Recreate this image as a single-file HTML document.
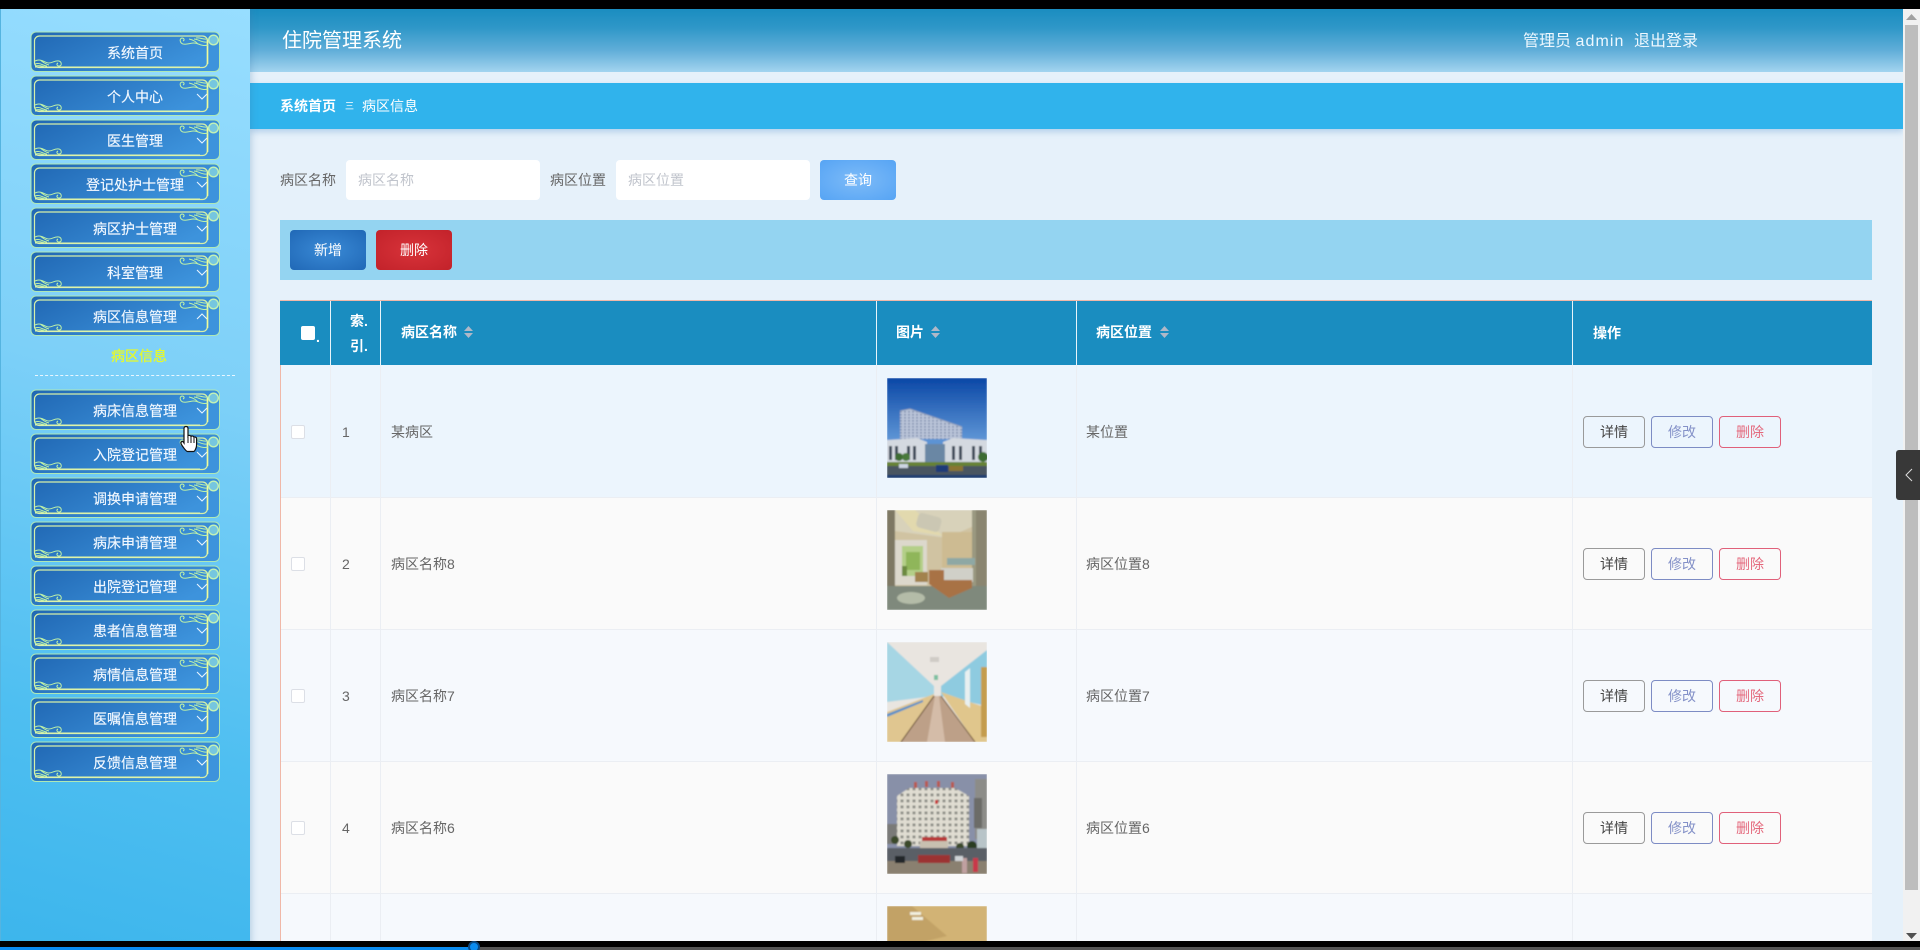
<!DOCTYPE html>
<html lang="zh-CN"><head><meta charset="utf-8"><title>住院管理系统</title>
<style>
html,body{margin:0;padding:0;width:1920px;height:950px;overflow:hidden;background:#e6f1fa}
body{font-family:"Liberation Sans","Noto Sans CJK SC",sans-serif;font-size:14px;color:#666;position:relative}
.a{position:absolute;white-space:nowrap}
#side{left:0;top:0;width:250px;height:950px;background:linear-gradient(196deg,#98deff 0%,#7dd0f8 40%,#4fbff1 75%,#3cb5ec 100%);border-left:1px solid #55b4e0;box-sizing:border-box;box-shadow:2px 0 6px rgba(60,120,170,.25);z-index:2}
.m{position:absolute;left:29px;width:190px;height:42px}
.m svg{position:absolute;left:0;top:0}
.m span{position:absolute;left:0;width:210px;text-align:center;top:12px;line-height:21px;color:#f2f8ff;font-size:14px;-webkit-text-stroke:.15px #f2f8ff}
#hd{left:250px;top:9px;width:1653px;height:63px;background:linear-gradient(180deg,#1a8dc0 0%,#2f97c8 30%,#5fadd8 65%,#a3d4ef 100%);color:#fff}
#bc{left:250px;top:83px;width:1653px;height:46px;background:#30b3ec;box-shadow:0 3px 6px rgba(90,150,210,.35);color:#fff;line-height:46px}
.ip{position:absolute;top:160px;height:40px;background:#fff;border-radius:4px;width:194px;line-height:40px;color:#c0c4cc;text-indent:12px}
.bt{position:absolute;width:76px;height:40px;line-height:40px;text-align:center;color:#fff;border-radius:4px}
#tb{left:280px;top:300px;width:1592px;height:641px;overflow:hidden;border-top:1px solid #f0b8a8;box-sizing:border-box}
.hl{position:absolute;top:0;width:1px;height:64px;background:#e8f4fa}
.vl{position:absolute;top:64px;width:1px;height:600px;background:#ebeef3}
.th{position:absolute;color:#fff;font-weight:bold;font-size:14px;line-height:24px}
.r{position:absolute;left:0;width:1592px;height:132px;box-sizing:border-box;border-bottom:1px solid #ebeef3}
.r>*{position:absolute}
.cb{left:11px;top:59px;width:12px;height:12px;border:1px solid #dcdfe6;background:#fff;border-radius:2px}
.tx{top:55px;line-height:22px;color:#666;font-size:14px}
.op{top:50px;width:60px;height:30px;border:1px solid;border-radius:4px;background:transparent;text-align:center;line-height:30px;font-size:14px}
.f>.cb{top:60px}.f>.tx{top:56px}.f>.op{top:51px}
.o1{left:1303px;border-color:#9a9a9a;color:#444}
.o2{left:1371px;border-color:#7d8cc4;color:#8491c8}
.o3{left:1439px;border-color:#e0607a;color:#e4687c}
.im{left:607px;top:12px;width:100px;height:100px;display:block}
.so{position:absolute;width:9px;height:12px}
</style></head><body>
<svg width="0" height="0" style="position:absolute"><defs>
<linearGradient id="g" x1="0" y1="0" x2="1" y2="0.4"><stop offset="0" stop-color="#2067b3"/><stop offset="1" stop-color="#3d93dc"/></linearGradient>
<filter id="bl" x="-5%" y="-5%" width="110%" height="110%"><feGaussianBlur stdDeviation=".8"/></filter>
<pattern id="w1" width="4" height="3" patternUnits="userSpaceOnUse"><rect width="4" height="3" fill="#bcc6da"/><rect x="1" y="0" width="2" height="1.6" fill="#7f8fae"/></pattern>
<pattern id="w4" width="6" height="6" patternUnits="userSpaceOnUse"><rect width="6" height="6" fill="#e0ddd2"/><rect x="1.5" y="1.5" width="3" height="2.8" fill="#8a8a84"/></pattern>
<symbol id="mb" viewBox="0 0 190 42">
<rect x="1" y="1" width="188.500" height="39.5" rx="5" fill="url(#g)" stroke="#aee8b6" stroke-width="1"/>
<rect x="4.5" y="5" width="173" height="31.5" rx="5" fill="none" stroke="#d6f0a8" stroke-width="1.2"/>
<path d="M177.5 9V33" stroke="#f0fb9a" stroke-width="1.6" fill="none"/>
<path d="M5 36H170" stroke="#e4f7a8" stroke-width="1" fill="none"/>
<path d="M5 30c6-3 10 2 14 2s6-3 10-2c3 1 3 5 0 5-2 0-3-2-1-3M5 33c5-2 8 2 12 2M5 35c4-1 7 0 10 1M10 29c3 2 5 4 9 5" fill="none" stroke="#bdf0a8" stroke-width="1"/>
<path d="M178 14c-6 2-10-2-14-2s-7 2-11 1c-3-1-4-5-1-6 2 0 3 2 1 3M177 11c-5 1-9-3-13-3M178 8c-5 1-8-2-12-1M168 13c-2-2-4-4-9-5" fill="none" stroke="#bdf0a8" stroke-width="1"/>
<circle cx="183.500" cy="9" r="4.8" fill="#76c6df" stroke="#c4f2b4" stroke-width="1.4"/>
</symbol>
</defs></svg>

<div id="side" class="a">
<div class="m" style="top:31px"><svg width="190" height="42"><use href="#mb"/></svg><span>系统首页</span></div>
<div class="m" style="top:75px"><svg width="190" height="42"><use href="#mb"/><path d="M167 19l5 5 5-5" fill="none" stroke="#e8f4ff" stroke-width="1.1"/></svg><span>个人中心</span></div>
<div class="m" style="top:119px"><svg width="190" height="42"><use href="#mb"/><path d="M167 19l5 5 5-5" fill="none" stroke="#e8f4ff" stroke-width="1.1"/></svg><span>医生管理</span></div>
<div class="m" style="top:163px"><svg width="190" height="42"><use href="#mb"/><path d="M167 19l5 5 5-5" fill="none" stroke="#e8f4ff" stroke-width="1.1"/></svg><span>登记处护士管理</span></div>
<div class="m" style="top:207px"><svg width="190" height="42"><use href="#mb"/><path d="M167 19l5 5 5-5" fill="none" stroke="#e8f4ff" stroke-width="1.1"/></svg><span>病区护士管理</span></div>
<div class="m" style="top:251px"><svg width="190" height="42"><use href="#mb"/><path d="M167 19l5 5 5-5" fill="none" stroke="#e8f4ff" stroke-width="1.1"/></svg><span>科室管理</span></div>
<div class="m" style="top:295px"><svg width="190" height="42"><use href="#mb"/><path d="M167 24l5-5 5 5" fill="none" stroke="#e8f4ff" stroke-width="1.1"/></svg><span>病区信息管理</span></div>
<div class="a" style="left:110px;top:346px;line-height:20px;color:#e4f92e;font-size:14px;-webkit-text-stroke:.3px #e4f92e">病区信息</div>
<div class="a" style="left:34px;top:375px;width:200px;border-top:1px dashed #e8f6ff"></div>
<div class="m" style="top:389px"><svg width="190" height="42"><use href="#mb"/><path d="M167 19l5 5 5-5" fill="none" stroke="#e8f4ff" stroke-width="1.1"/></svg><span>病床信息管理</span></div>
<div class="m" style="top:433px"><svg width="190" height="42"><use href="#mb"/><path d="M167 19l5 5 5-5" fill="none" stroke="#e8f4ff" stroke-width="1.1"/></svg><span>入院登记管理</span></div>
<div class="m" style="top:477px"><svg width="190" height="42"><use href="#mb"/><path d="M167 19l5 5 5-5" fill="none" stroke="#e8f4ff" stroke-width="1.1"/></svg><span>调换申请管理</span></div>
<div class="m" style="top:521px"><svg width="190" height="42"><use href="#mb"/><path d="M167 19l5 5 5-5" fill="none" stroke="#e8f4ff" stroke-width="1.1"/></svg><span>病床申请管理</span></div>
<div class="m" style="top:565px"><svg width="190" height="42"><use href="#mb"/><path d="M167 19l5 5 5-5" fill="none" stroke="#e8f4ff" stroke-width="1.1"/></svg><span>出院登记管理</span></div>
<div class="m" style="top:609px"><svg width="190" height="42"><use href="#mb"/><path d="M167 19l5 5 5-5" fill="none" stroke="#e8f4ff" stroke-width="1.1"/></svg><span>患者信息管理</span></div>
<div class="m" style="top:653px"><svg width="190" height="42"><use href="#mb"/><path d="M167 19l5 5 5-5" fill="none" stroke="#e8f4ff" stroke-width="1.1"/></svg><span>病情信息管理</span></div>
<div class="m" style="top:697px"><svg width="190" height="42"><use href="#mb"/><path d="M167 19l5 5 5-5" fill="none" stroke="#e8f4ff" stroke-width="1.1"/></svg><span>医嘱信息管理</span></div>
<div class="m" style="top:741px"><svg width="190" height="42"><use href="#mb"/><path d="M167 19l5 5 5-5" fill="none" stroke="#e8f4ff" stroke-width="1.1"/></svg><span>反馈信息管理</span></div>
</div>

<svg class="a" style="left:180px;top:425px;z-index:5" width="20" height="28" viewBox="0 0 20 28"><path d="M6 1.5c1.200 0 2 .8 2 2V11c.5-.8 2.600-.8 3 .5.600-.8 2.600-.6 3 .8.800-.6 2.600-.2 2.600 1.400V20c0 3-2 6.500-3 6.500H7.500C6 26.500 1.500 20 1 18.500c-.4-1.500 1-2.500 2.200-1.700L4 18V3.500c0-1.200.8-2 2-2z" fill="#fff" stroke="#111" stroke-width="1.200"/><path d="M8 12v6M11 12v6M14 13v5" stroke="#111" stroke-width="1" fill="none"/></svg>

<div id="hd" class="a">
<div class="a" style="left:32px;top:18px;font-size:20px;line-height:28px">住院管理系统</div>
<div class="a" style="left:1273px;top:22px;font-size:16px;line-height:22px;color:#eef8ff">管理员 <span style="letter-spacing:1.1px">admin</span></div>
<div class="a" style="left:1384px;top:22px;font-size:16px;line-height:22px;color:#eef8ff">退出登录</div>
</div>

<div id="bc" class="a">
<span class="a" style="left:30px;font-weight:bold">系统首页</span>
<span class="a" style="left:95px;font-size:9px">三</span>
<span class="a" style="left:112px">病区信息</span>
</div>

<div class="a" style="left:280px;top:170px;line-height:20px">病区名称</div>
<div class="ip" style="left:346px">病区名称</div>
<div class="a" style="left:550px;top:170px;line-height:20px">病区位置</div>
<div class="ip" style="left:616px">病区位置</div>
<div class="bt" style="left:820px;top:160px;background:radial-gradient(ellipse at center,#7dbbf8 0%,#56a4f4 100%)">查询</div>

<div class="a" style="left:280px;top:220px;width:1592px;height:60px;background:#94d4f1"></div>
<div class="bt" style="left:290px;top:230px;background:radial-gradient(ellipse at center,#3a8ad6 0%,#2068b6 100%)">新增</div>
<div class="bt" style="left:376px;top:230px;background:radial-gradient(ellipse at center,#d8333a 0%,#c2222a 100%)">删除</div>

<div id="tb" class="a">
<div class="a" style="left:0;top:0;width:1592px;height:64px;background:#1a8dc0"></div>
<div class="r f" style="top:64px;background:#ecf5fd;height:133px">
<div class="cb"></div><div class="tx" style="left:62px">1</div><div class="tx" style="left:111px">某病区</div>
<svg class="im" style="top:13px" viewBox="0 0 100 100"><g filter="url(#bl)"><defs><linearGradient id="s1" x1="0" y1="0" x2="0" y2="1"><stop offset="0" stop-color="#0a47a6"/><stop offset=".6" stop-color="#5c93d4"/></linearGradient></defs><rect width="100" height="100" fill="url(#s1)"/><path d="M13 33l10-2 52 18v12H13z" fill="url(#w1)"/><path d="M13 33l10-2 52 18" stroke="#9aa6bc" fill="none"/><path d="M0 62l30-2 10 4v22H0z" fill="#d4d9e0"/><path d="M56 64l10-4 34 2v24H56z" fill="#d4d9e0"/><path d="M2 68h3v14H2zM8 68h3v14H8zM20 68h3v14h-3zM26 68h3v14h-3zM65 68h3v14h-3zM72 68h3v14h-3zM85 68h3v14h-3zM92 68h3v14h-3z" fill="#3b4656"/><rect x="38" y="66" width="20" height="19" fill="#6b87a4"/><circle cx="12" cy="79" r="4" fill="#3e6c32"/><circle cx="19" cy="79" r="4" fill="#4a7a3a"/><circle cx="96" cy="79" r="5" fill="#3e6c32"/><rect y="84" width="100" height="4" fill="#668234"/><rect y="88" width="100" height="9" fill="#4a5560"/><rect y="97" width="100" height="3" fill="#1b3c70"/><rect x="49" y="87" width="12" height="7" fill="#1a3a78"/><rect x="62" y="88" width="14" height="5" fill="#8a7430"/><rect x="12" y="86" width="9" height="4" fill="#cdd6e4"/></g></svg>
<div class="tx" style="left:806px">某位置</div>
<div class="op o1">详情</div><div class="op o2">修改</div><div class="op o3">删除</div>
</div>
<div class="r" style="top:197px;background:#fafafa">
<div class="cb"></div><div class="tx" style="left:62px">2</div><div class="tx" style="left:111px">病区名称8</div>
<svg class="im" viewBox="0 0 100 100"><g filter="url(#bl)"><rect width="100" height="100" fill="#d0c3a2"/><path d="M0 0h100v10L60 28 15 22 0 20z" fill="#d8d2ba"/><path d="M8 0h20l28 26-30-5z" fill="#e2d9ae"/><rect x="30" y="5" width="24" height="15" rx="4" fill="#cbc7b3" transform="rotate(15 42 12)"/><rect y="0" width="8" height="100" fill="#7e7864"/><rect x="8" y="30" width="32" height="45" fill="#dcd8cc"/><rect x="15" y="36" width="21" height="30" fill="#b4cf88"/><rect x="19" y="42" width="14" height="18" fill="#8fb65a"/><rect x="55" y="22" width="30" height="50" fill="#cdbb92"/><rect x="85" y="0" width="4" height="80" fill="#9a9880"/><rect x="89" y="0" width="11" height="100" fill="#8a8570"/><rect x="60" y="48" width="28" height="7" fill="#8ea8a4"/><rect x="0" y="76" width="100" height="24" fill="#7f897c"/><ellipse cx="24" cy="88" rx="14" ry="6" fill="#b4bca8"/><rect x="54" y="58" width="32" height="14" fill="#d0d0c8"/><path d="M42 60h15v10h28v8L62 88 42 74z" fill="#a87244"/><rect x="28" y="62" width="13" height="10" fill="#a2824e"/><rect x="15" y="56" width="5" height="10" fill="#6c8a40"/></g></svg>
<div class="tx" style="left:806px">病区位置8</div>
<div class="op o1">详情</div><div class="op o2">修改</div><div class="op o3">删除</div>
</div>
<div class="r" style="top:329px;background:#f6f9fd">
<div class="cb"></div><div class="tx" style="left:62px">3</div><div class="tx" style="left:111px">病区名称7</div>
<svg class="im" viewBox="0 0 100 100"><g filter="url(#bl)"><rect width="100" height="100" fill="#e9e5e0"/><path d="M0 0l47 44v10L0 60z" fill="#a6d6e4"/><path d="M0 70l47-18v4L14 100H0z" fill="#e0c690"/><path d="M0 72l36-14v2L0 75z" fill="#5a90c8"/><path d="M100 8L54 44v10l46 10z" fill="#8ecbe0"/><path d="M54 50l46 16v34H88z" fill="#e0c68c"/><path d="M94 25h6v70h-6z" fill="#c49c4e"/><path d="M78 30l5-4v40l-5-4z" fill="#e8f0f0"/><path d="M14 100l33-46h7l34 46z" fill="#bda088"/><path d="M40 100l8-46h4l6 46z" fill="#d4bca8"/><path d="M14 100l33-46" stroke="#5a4028" stroke-width="1"/><path d="M88 100L54 54" stroke="#6a5030" stroke-width="1"/><rect x="43" y="15" width="9" height="5" fill="#cfcbc6"/><rect x="47" y="33" width="4" height="5" fill="#7cc0a0"/></g></svg>
<div class="tx" style="left:806px">病区位置7</div>
<div class="op o1">详情</div><div class="op o2">修改</div><div class="op o3">删除</div>
</div>
<div class="r" style="top:461px;background:#fafafa">
<div class="cb"></div><div class="tx" style="left:62px">4</div><div class="tx" style="left:111px">病区名称6</div>
<svg class="im" viewBox="0 0 100 100"><g filter="url(#bl)"><rect width="100" height="100" fill="#8890a8"/><rect x="88" y="5" width="12" height="60" fill="#8c8c88"/><rect x="87" y="24" width="8" height="30" fill="#6c6c68"/><path d="M10 22l12-8h46l14 8v50H10z" fill="url(#w4)"/><rect x="0" y="50" width="10" height="20" fill="#7a7a78"/><path d="M27 8h3v6h-3zM38 7h3v6h-3zM50 7h3v6h-3zM64 8h3v6h-3z" fill="#b85850"/><rect x="48" y="26" width="3" height="4" fill="#c83030"/><rect x="35" y="63" width="25" height="4" fill="#b83838"/><rect x="33" y="67" width="28" height="9" fill="#c8c0b0"/><rect x="90" y="55" width="10" height="20" fill="#b8c4c8"/><circle cx="21" cy="70" r="4" fill="#3a4a2c"/><circle cx="73" cy="73" r="4" fill="#3a4a2c"/><circle cx="85" cy="72" r="5" fill="#2c3c24"/><circle cx="8" cy="66" r="4" fill="#3a4a2c"/><rect y="74" width="100" height="13" fill="#5a5f66"/><rect y="87" width="100" height="13" fill="#8a8070"/><rect x="31" y="81" width="32" height="8" fill="#9c3030"/><rect x="8" y="82" width="10" height="7" fill="#24282c"/><rect x="75" y="84" width="5" height="15" fill="#c0a0a0"/><rect x="86" y="84" width="5" height="14" fill="#c83848"/><rect x="68" y="82" width="8" height="5" fill="#d0d4d8"/></g></svg>
<div class="tx" style="left:806px">病区位置6</div>
<div class="op o1">详情</div><div class="op o2">修改</div><div class="op o3">删除</div>
</div>
<div class="r" style="top:593px;background:#f6f9fd">
<svg class="im" viewBox="0 0 100 100"><g filter="url(#bl)"><rect width="100" height="100" fill="#d2b374"/><path d="M0 0h25L60 30 0 45z" fill="#c2a266"/><rect x="23" y="6" width="11" height="3" fill="#f2f0e0"/><rect x="25" y="11" width="11" height="3" fill="#f2f0e0"/></g></svg>
</div>
<div class="a" style="left:0;top:64px;width:1px;height:600px;background:#f0b8a8"></div>
<div class="hl" style="left:50px"></div><div class="hl" style="left:100px"></div><div class="hl" style="left:596px"></div><div class="hl" style="left:796px"></div><div class="hl" style="left:1292px"></div>
<div class="vl" style="left:50px"></div><div class="vl" style="left:100px"></div><div class="vl" style="left:596px"></div><div class="vl" style="left:796px"></div><div class="vl" style="left:1292px"></div>
<div class="a" style="left:21px;top:25px;width:14px;height:14px;background:#fff;border-radius:2px"></div>
<div class="th" style="left:36px;top:24px">.</div>
<div class="th" style="left:70px;top:8px">索.</div>
<div class="th" style="left:70px;top:33px">引.</div>
<div class="th" style="left:121px;top:19px">病区名称</div>
<svg class="so" style="left:184px;top:25px"><path d="M4.500 0L9 5H0zM0 7h9L4.500 12z" fill="#b0b8c8"/></svg>
<div class="th" style="left:616px;top:19px">图片</div>
<svg class="so" style="left:651px;top:25px"><path d="M4.500 0L9 5H0zM0 7h9L4.500 12z" fill="#b0b8c8"/></svg>
<div class="th" style="left:816px;top:19px">病区位置</div>
<svg class="so" style="left:880px;top:25px"><path d="M4.500 0L9 5H0zM0 7h9L4.500 12z" fill="#b0b8c8"/></svg>
<div class="th" style="left:1313px;top:20px">操作</div>
</div>

<div class="a" style="left:1903px;top:9px;width:17px;height:932px;background:#f1f1f1;z-index:3"></div>
<div class="a" style="left:1905px;top:25px;width:13px;height:865px;background:#bdbdbd;z-index:3"></div>
<svg class="a" style="left:1905px;top:13px;z-index:3" width="13" height="9"><path d="M6.500 1L12 7H1z" fill="#a0a0a0"/></svg>
<svg class="a" style="left:1905px;top:931px;z-index:4" width="13" height="9"><path d="M1 2h11L6.500 8z" fill="#505050"/></svg>
<div class="a" style="left:1896px;top:450px;width:24px;height:50px;background:#383838;border-radius:3px 0 0 3px;z-index:4"></div>
<svg class="a" style="left:1903px;top:467px;z-index:5" width="12" height="16"><path d="M9 2L3 8l6 6" fill="none" stroke="#ddd" stroke-width="1"/></svg>

<div class="a" style="left:0;top:0;width:1920px;height:9px;background:#000;z-index:6"></div>
<div class="a" style="left:0;top:941px;width:1920px;height:9px;background:#000;overflow:hidden;z-index:6">
<div class="a" style="left:0;top:6px;width:1920px;height:3px;background:#555"></div>
<div class="a" style="left:0;top:6px;width:474px;height:3px;background:#0a8cf0"></div>
</div>
<div class="a" style="left:468px;top:941px;width:12px;height:9px;overflow:hidden;z-index:7"><div style="position:absolute;left:0;top:0;width:8px;height:8px;border:2px solid #0a4a86;border-radius:50%;background:#0a8cf0"></div></div>
</body></html>
